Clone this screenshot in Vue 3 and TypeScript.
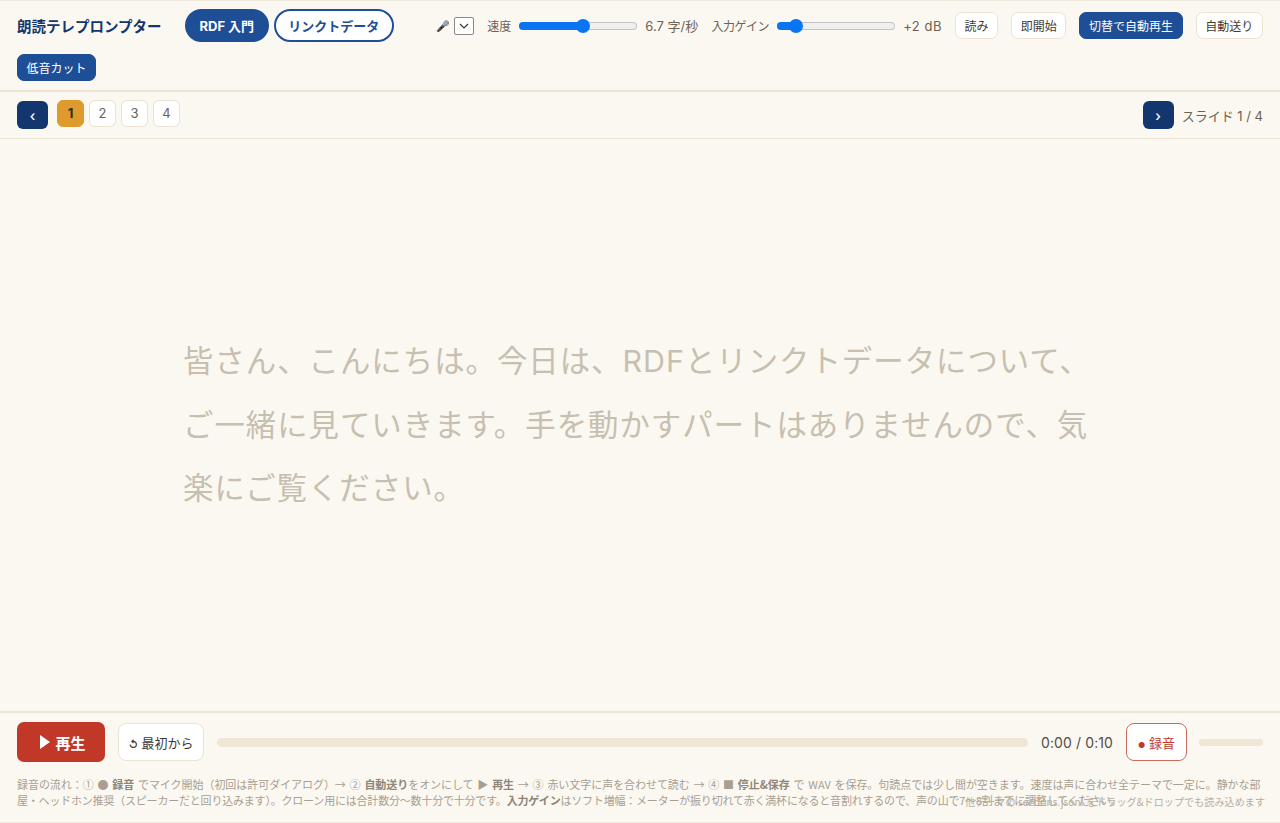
<script setup lang="ts">
import { ref } from 'vue'

const pages = [1, 2, 3, 4]
const current = ref(1)
const script = '皆さん、こんにちは。今日は、RDFとリンクトデータについて、ご一緒に見ていきます。手を動かすパートはありませんので、気楽にご覧ください。'
</script>

<template>
  <div class="app">
    <header class="topbar">
      <h1 class="title">朗読テレプロンプター</h1>
      <div class="tabs">
        <button class="tab active">RDF 入門</button>
        <button class="tab">リンクトデータ</button>
      </div>
      <div class="group mic-group">
        <span class="mic">🎤</span>
        <span class="select">
          <svg width="10" height="6" viewBox="0 0 10 6"><path d="M1 1l4 4 4-4" fill="none" stroke="#333" stroke-width="1.2" /></svg>
        </span>
      </div>
      <div class="group">
        <span class="label">速度</span>
        <span class="range"><i class="fill" style="width: 54%"></i><i class="thumb" style="left: 54%"></i></span>
        <span class="val">6.7 字/秒</span>
      </div>
      <div class="group">
        <span class="label narrow">入力ゲイン</span>
        <span class="range"><i class="fill" style="width: 16%"></i><i class="thumb" style="left: 16%"></i></span>
        <span class="val wide">+2 dB</span>
      </div>
      <button class="btn">読み</button>
      <button class="btn">即開始</button>
      <button class="btn on">切替で自動再生</button>
      <button class="btn">自動送り</button>
      <button class="btn on">低音カット</button>
    </header>

    <nav class="slidenav">
      <button class="arrow">‹</button>
      <div class="pages">
        <button v-for="p in pages" :key="p" class="page" :class="{ cur: p === current }">{{ p }}</button>
      </div>
      <span class="spacer"></span>
      <button class="arrow">›</button>
      <span class="count">スライド 1 / 4</span>
    </nav>

    <main class="stage">
      <p class="script">{{ script }}</p>
    </main>

    <footer class="bottom">
      <div class="player">
        <button class="play"><span class="tri"></span>再生</button>
        <button class="restart"><small>↺</small> 最初から</button>
        <div class="progress"></div>
        <span class="time">0:00 / 0:10</span>
        <button class="rec"><small>●</small> 録音</button>
        <div class="meter"></div>
      </div>
      <p class="help">録音の流れ：① ● <b>録音</b> でマイク開始（初回は許可ダイアログ）→ ② <b>自動送り</b>をオンにして ▶ <b>再生</b> → ③ 赤い文字に声を合わせて読む → ④ ■ <b>停止&amp;保存</b> で WAV を保存。句読点では少し間が空きます。速度は声に合わせ全テーマで一定に。静かな部<span class="tight">屋・ヘッドホン推奨（スピーカーだと回り込みます）。クローン用には合計数分〜数十分で十分です。<b>入力ゲイン</b>はソフト増幅：メーターが振り切れて赤く満杯になると音割れするので、声の山で7〜8割までに調整してください。</span></p>
      <span class="drop">他テーマの sections.jsonl をドラッグ&amp;ドロップでも読み込めます</span>
    </footer>
  </div>
</template>

<style>
html, body { margin: 0; background: #fbf8f2; }
</style>

<style scoped>
.app {
  height: 823px;
  display: flex;
  flex-direction: column;
  position: relative;
  background: #fbf8f2;
  color: #6b6255;
  font-family: "Inter", "Noto Sans CJK JP", sans-serif;
  font-size: 13px;
  overflow: hidden;
  border-top: 1px solid #efe9de;
  box-sizing: border-box;
}
button { font-family: inherit; cursor: pointer; }

.topbar {
  display: flex;
  flex-wrap: wrap;
  align-items: center;
  align-content: flex-start;
  gap: 12px 13.2px;
  padding: 8px 17px;
  height: 91px;
  flex: none;
  box-sizing: border-box;
  border-bottom: 2px solid #ece3d2;
}
.title {
  margin: 0 9.8px 0 0;
  width: 145px;
  font-size: 14.5px;
  font-weight: 700;
  color: #14366f;
  white-space: nowrap;
}
.tabs { display: flex; gap: 5px; }
.tab {
  height: 33px;
  padding: 0 12.5px;
  border-radius: 17px;
  border: 2px solid #1e4e96;
  background: #fff;
  color: #1e4e96;
  font-size: 13px;
  font-weight: 700;
  white-space: nowrap;
}
.tab.active { background: #1e4e96; color: #fff; }
.group { display: flex; align-items: center; gap: 8px; white-space: nowrap; }
.mic-group { margin-left: 29.3px; gap: 4px; }
.mic { font-size: 11px; }
.select {
  width: 20px;
  height: 18px;
  box-sizing: border-box;
  border: 1px solid #8a8a8a;
  border-radius: 2px;
  background: #fff;
  display: flex;
  align-items: center;
  justify-content: center;
}
.label { font-size: 12px; }
.label.narrow { letter-spacing: -0.4px; }
.val { font-size: 13px; }
.val.wide { letter-spacing: 0.5px; }
.range {
  position: relative;
  display: block;
  width: 118px;
  height: 8px;
  border-radius: 4px;
  background: #efefef;
  box-shadow: inset 0 0 0 1px #c4c4c4;
}
.fill { position: absolute; left: 0; top: 0; bottom: 0; background: #0a75f2; border-radius: 4px; }
.thumb {
  position: absolute;
  top: 50%;
  width: 14px;
  height: 14px;
  margin: -7px 0 0 -7px;
  border-radius: 50%;
  background: #0a75f2;
}
.btn {
  height: 27px;
  padding: 0 8.5px;
  border: 1.5px solid #ece3d2;
  border-radius: 7px;
  background: #fff;
  color: #3f3a33;
  font-size: 12px;
  white-space: nowrap;
}
.btn.on { background: #1e4e96; border-color: #1e4e96; color: #fff; }

.slidenav {
  display: flex;
  align-items: center;
  height: 47px;
  padding: 0 17px;
  box-sizing: border-box;
  flex: none;
  border-bottom: 1px solid #ece3d2;
}
.arrow {
  width: 31px;
  height: 28px;
  border: 0;
  border-radius: 6px;
  background: #14366f;
  color: #fff;
  font-weight: 500;
  font-size: 14px;
  padding: 0;
}
.pages { display: flex; gap: 5px; margin: -4px 0 0 9px; }
.page {
  width: 27px;
  height: 27px;
  padding: 0;
  border: 1.5px solid #ece3d2;
  border-radius: 6px;
  background: #fff;
  color: #6b6255;
  font-size: 13px;
}
.page.cur { background: #dc9b2c; border-color: #dc9b2c; color: #2f2a22; font-weight: 700; }
.spacer { flex: 1; }
.count { margin-left: 8px; }

.stage {
  flex: 1;
  min-height: 0;
  display: flex;
  align-items: center;
  justify-content: center;
  padding-top: 1px;
}
.script {
  margin: 0;
  width: 914px;
  font-size: 30.4px;
  line-height: 63.5px;
  color: #c7bfaf;
  letter-spacing: 1px;
}

.bottom {
  flex: none;
  height: 112px;
  box-sizing: border-box;
  padding: 9px 17px 0;
  border-top: 2px solid #ece3d2;
  border-bottom: 1px solid #efe9de;
}
.player { display: flex; align-items: center; gap: 13px; height: 40px; }
.play {
  width: 88px;
  height: 40px;
  padding: 0 0 0 4px;
  border: 0;
  border-radius: 7px;
  background: #c13828;
  color: #fff;
  font-size: 15px;
  font-weight: 700;
  display: flex;
  align-items: center;
  justify-content: center;
  gap: 5px;
}
.tri {
  width: 0;
  height: 0;
  border-left: 10px solid #fff;
  border-top: 7px solid transparent;
  border-bottom: 7px solid transparent;
}
.restart {
  width: 86px;
  height: 38px;
  padding: 0;
  border: 1.5px solid #ece3d2;
  border-radius: 8px;
  background: #fff;
  color: #3f3a33;
  font-size: 13px;
  white-space: nowrap;
}
.restart small { font-size: 10px; font-weight: 700; }
.progress { flex: 1; height: 9px; border-radius: 5px; background: #efe6d5; }
.time { font-size: 14px; color: #554d42; white-space: nowrap; letter-spacing: 0.1px; }
.rec {
  width: 61px;
  height: 38px;
  padding: 0;
  border: 1.5px solid #cf6a5d;
  border-radius: 8px;
  background: #fff;
  color: #c13828;
  font-size: 13px;
  white-space: nowrap;
}
.rec small { font-size: 8px; }
.meter { width: 64px; height: 7px; border-radius: 4px; background: #efe6d5; margin-left: -1px; }
.help {
  margin: 14px 0 0;
  font-family: "Noto Sans CJK JP", sans-serif;
  font-size: 11px;
  line-height: 16px;
  letter-spacing: -0.05px;
  word-spacing: 1.4px;
  color: #a89f90;
}
.help b { font-weight: 700; color: #8f8677; }
.tight { letter-spacing: -0.2px; }
.drop {
  position: absolute;
  right: 15px;
  bottom: 14px;
  font-family: "Noto Sans CJK JP", sans-serif;
  font-size: 10px;
  letter-spacing: 0.12px;
  color: #b5ad9f;
  white-space: nowrap;
}
</style>
